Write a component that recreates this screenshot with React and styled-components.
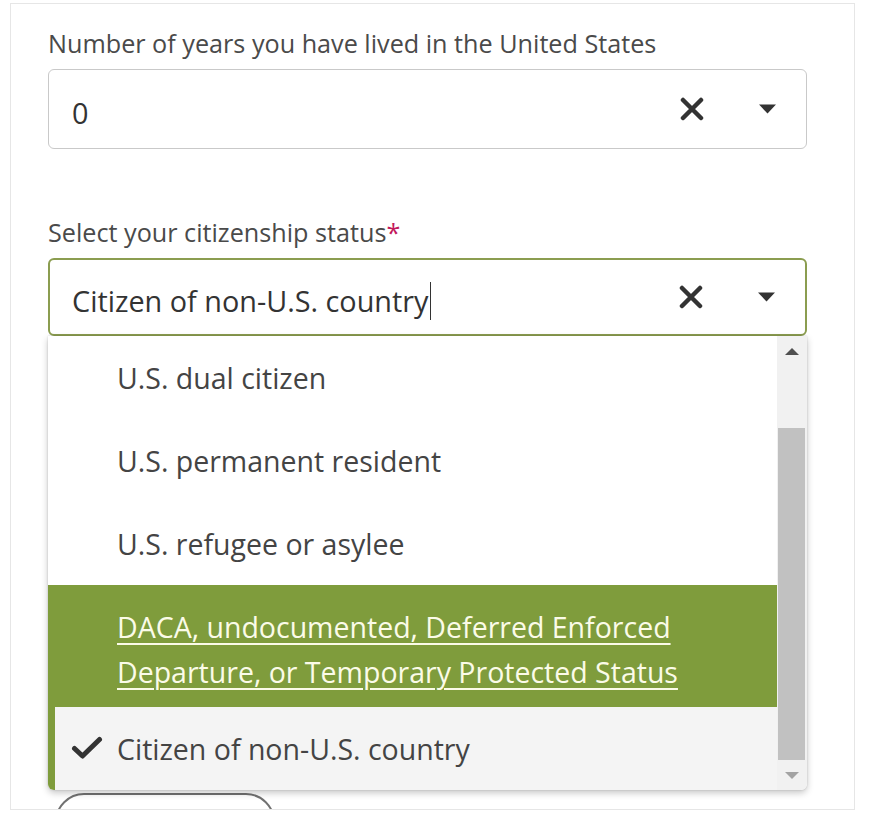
import React from 'react';
import styled, { createGlobalStyle } from 'styled-components';

const GlobalStyle = createGlobalStyle`
  body {
    margin: 0;
    background: #fff;
    font-family: "Open Sans", "Noto Sans", sans-serif;
  }
`;

const Card = styled.div`
  box-sizing: border-box;
  margin: 3px 0 0 10px;
  width: 845px;
  height: 807px;
  border: 1px solid #e6e6e6;
  padding: 22px 0 0 37px;
  overflow: hidden;
  background: #fff;
`;

const Group = styled.div`
  margin-top: ${(p) => p.$gap || 0}px;
`;

const Label = styled.label`
  display: block;
  font-size: 25.2px;
  line-height: 34px;
  color: #4a4a4a;
`;

const Required = styled.span`
  color: #c2185b;
`;

const FieldWrap = styled.div`
  position: relative;
  margin-top: ${(p) => p.$gap}px;
  width: 759px;
`;

const Field = styled.div`
  box-sizing: border-box;
  display: flex;
  align-items: center;
  height: ${(p) => (p.$focused ? 78 : 80)}px;
  padding: 0 29px 0 ${(p) => (p.$focused ? 22 : 23)}px;
  border: ${(p) => (p.$focused ? '2px solid #8b9d50' : '1px solid #c9c9c9')};
  border-radius: 6px;
  background: #fff;
`;

const Value = styled.div`
  flex: 1;
  display: flex;
  align-items: center;
  padding-top: 8px;
  font-size: 28.8px;
  line-height: 38px;
  color: #333;
`;

const TextCursor = styled.span`
  display: inline-block;
  width: 0;
  height: 38px;
  margin-left: 2px;
  border-left: 1.5px solid #333;
`;

const IconSlot = styled.span`
  display: flex;
  align-items: center;
  justify-content: center;
  width: ${(p) => p.$w}px;
  margin-left: ${(p) => p.$ml || 0}px;
  color: #333;
`;

const Menu = styled.div`
  position: absolute;
  top: 100%;
  left: 0;
  right: 0;
  z-index: 5;
  display: flex;
  background: #fff;
  border-radius: 0 0 6px 6px;
  overflow: hidden;
  box-shadow: 0 3px 7px rgba(0, 0, 0, 0.22), 0 0 2px rgba(0, 0, 0, 0.18);
`;

const List = styled.ul`
  flex: 1;
  margin: 0;
  padding: 0;
  list-style: none;
`;

const Option = styled.li`
  box-sizing: border-box;
  display: flex;
  align-items: center;
  min-height: 83px;
  padding: ${(p) => (p.$active ? '20px 20px 12px 16px' : '17px 20px 15px 16px')};
  border-left: 7px solid ${(p) => (p.$active || p.$selected ? '#7f9c3c' : '#fff')};
  background: ${(p) => (p.$active ? '#7f9c3c' : p.$selected ? '#f4f4f4' : '#fff')};
  font-size: 28.5px;
  line-height: 45px;
  color: ${(p) => (p.$active ? '#fbfbe8' : '#444')};
`;

const OptionText = styled.span`
  text-decoration: ${(p) => (p.$active ? 'underline' : 'none')};
  text-decoration-thickness: 2px;
  text-underline-offset: 5px;
`;

const Check = styled.span`
  display: flex;
  align-items: center;
  flex: 0 0 46px;
  margin-top: -3px;
  color: #333;
`;

const Scrollbar = styled.div`
  display: flex;
  flex-direction: column;
  width: 30px;
  background: #f1f1f1;
`;

const ArrowBox = styled.div`
  display: flex;
  align-items: center;
  justify-content: center;
  height: 30px;
`;

const Triangle = styled.span`
  width: 0;
  height: 0;
  border-left: 7px solid transparent;
  border-right: 7px solid transparent;
  ${(p) =>
    p.$up
      ? 'border-bottom: 7px solid #505050;'
      : 'border-top: 7px solid #a3a3a3;'}
`;

const TrackGap = styled.div`
  flex: 0 0 62px;
`;

const Thumb = styled.div`
  flex: 1;
  margin: 0 2px 0 1px;
  background: #c1c1c1;
`;

const GhostButton = styled.button`
  display: block;
  margin: 457px 0 0 7px;
  width: 220px;
  height: 58px;
  border: 2px solid #717171;
  border-radius: 30px;
  background: #fff;
`;

const ClearIcon = () => (
  <svg width="26" height="24" viewBox="0 0 26 24">
    <path d="M4 3 L22 21 M22 3 L4 21" stroke="#333" strokeWidth="4.5" strokeLinecap="round" fill="none" />
  </svg>
);

const CaretIcon = () => (
  <svg width="19" height="10" viewBox="0 0 19 10">
    <path d="M1 0.5 H18 L9.5 9.5 Z" fill="#333" />
  </svg>
);

const CheckIcon = () => (
  <svg width="32" height="24" viewBox="0 0 32 24">
    <path d="M3.5 12.5 L11.5 20 L28.5 3.5" stroke="#333" strokeWidth="5" strokeLinecap="round" strokeLinejoin="round" fill="none" />
  </svg>
);

const options = [
  { label: 'U.S. dual citizen' },
  { label: 'U.S. permanent resident' },
  { label: 'U.S. refugee or asylee' },
  { label: 'DACA, undocumented, Deferred Enforced Departure, or Temporary Protected Status', active: true },
  { label: 'Citizen of non-U.S. country', selected: true },
];

const Controls = () => (
  <>
    <IconSlot $w={26}>
      <ClearIcon />
    </IconSlot>
    <IconSlot $w={19} $ml={53}>
      <CaretIcon />
    </IconSlot>
  </>
);

export default function App() {
  return (
    <>
      <GlobalStyle />
      <Card>
        <Group>
          <Label>Number of years you have lived in the United States</Label>
          <FieldWrap $gap={9}>
            <Field>
              <Value>0</Value>
              <Controls />
            </Field>
          </FieldWrap>
        </Group>

        <Group $gap={66}>
          <Label>
            Select your citizenship status<Required>*</Required>
          </Label>
          <FieldWrap $gap={9}>
            <Field $focused>
              <Value>
                Citizen of non-U.S. country
                <TextCursor />
              </Value>
              <Controls />
            </Field>
            <Menu>
              <List>
                {options.map((o) => (
                  <Option key={o.label} $active={o.active} $selected={o.selected}>
                    <Check>{o.selected && <CheckIcon />}</Check>
                    <OptionText $active={o.active}>{o.label}</OptionText>
                  </Option>
                ))}
              </List>
              <Scrollbar>
                <ArrowBox>
                  <Triangle $up />
                </ArrowBox>
                <TrackGap />
                <Thumb />
                <ArrowBox>
                  <Triangle />
                </ArrowBox>
              </Scrollbar>
            </Menu>
          </FieldWrap>
          <GhostButton type="button" aria-label="Continue" />
        </Group>
      </Card>
    </>
  );
}
